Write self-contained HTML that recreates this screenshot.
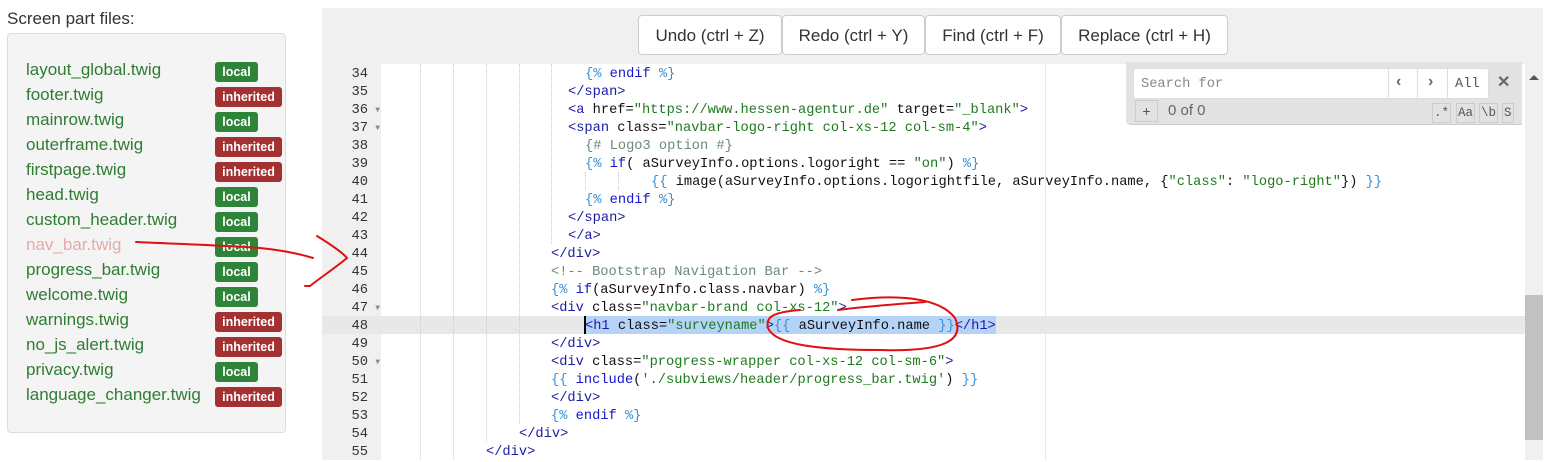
<!DOCTYPE html>
<html><head><meta charset="utf-8"><style>
body{margin:0;width:1565px;height:460px;overflow:hidden;background:#fff;font-family:"Liberation Sans",sans-serif;position:relative}
.abs{position:absolute}
.title{left:7px;top:9px;font-size:17px;color:#333}
.box{left:7px;top:33px;width:277px;height:398px;background:#f4f4f4;border:1px solid #ddd;border-radius:4px}
.it{position:absolute;left:26px;font-size:17px;color:#2e7d32;line-height:20px}
.bd{position:absolute;left:215px;height:20px;border-radius:3px;color:#fff;font-weight:bold;font-size:12.5px;line-height:20px;text-align:center}
.lo{background:#2e8539;width:43px}.in{background:#a33131;width:67px}
.btn{position:absolute;top:15px;height:40px;background:#fff;border:1px solid #ccc;border-radius:4px;font-size:17px;color:#333;line-height:40px;text-align:center;box-sizing:border-box}
.ln{position:absolute;left:322px;width:46px;text-align:right;font-family:"Liberation Mono",monospace;font-size:13.8px;color:#333;line-height:18px;margin-top:2px}
.cd{position:absolute;font-family:"Liberation Mono",monospace;font-size:13.7px;line-height:18px;white-space:pre;color:#111;margin-top:2px}
.t{color:#1a1aa6}.s{color:#1f7a1f}.b{color:#3b8fd1}.k{color:#1515d0}.c{color:#6a8a7a}
.g{position:absolute;width:0;border-left:1px dotted #ccc;top:64px;height:396px}
</style></head><body>
<div class="abs title">Screen part files:</div>
<div class="abs box"></div>
<div class="it" style="top:60px">layout_global.twig</div><div class="bd lo" style="top:62px">local</div>
<div class="it" style="top:85px">footer.twig</div><div class="bd in" style="top:87px">inherited</div>
<div class="it" style="top:110px">mainrow.twig</div><div class="bd lo" style="top:112px">local</div>
<div class="it" style="top:135px">outerframe.twig</div><div class="bd in" style="top:137px">inherited</div>
<div class="it" style="top:160px">firstpage.twig</div><div class="bd in" style="top:162px">inherited</div>
<div class="it" style="top:185px">head.twig</div><div class="bd lo" style="top:187px">local</div>
<div class="it" style="top:210px">custom_header.twig</div><div class="bd lo" style="top:212px">local</div>
<div class="it" style="top:235px;color:#e8a9a9">nav_bar.twig</div><div class="bd lo" style="top:237px">local</div>
<div class="it" style="top:260px">progress_bar.twig</div><div class="bd lo" style="top:262px">local</div>
<div class="it" style="top:285px">welcome.twig</div><div class="bd lo" style="top:287px">local</div>
<div class="it" style="top:310px">warnings.twig</div><div class="bd in" style="top:312px">inherited</div>
<div class="it" style="top:335px">no_js_alert.twig</div><div class="bd in" style="top:337px">inherited</div>
<div class="it" style="top:360px">privacy.twig</div><div class="bd lo" style="top:362px">local</div>
<div class="it" style="top:385px">language_changer.twig</div><div class="bd in" style="top:387px">inherited</div>

<div class="abs" style="left:322px;top:8px;width:1221px;height:56px;background:#f0f0f0"></div>
<div class="abs" style="left:322px;top:64px;width:59px;height:396px;background:#f0f0f0"></div>
<div class="abs" style="left:1525px;top:64px;width:18px;height:396px;background:#f0f0f0"></div>
<div class="abs" style="left:1525px;top:295px;width:18px;height:145px;background:#c1c1c1"></div>
<div class="abs" style="left:1529px;top:75px;width:0;height:0;border:5px solid transparent;border-bottom:5px solid #555;border-top:0"></div>
<div class="abs" style="left:322px;top:316px;width:1203px;height:18px;background:#e8e8e8"></div>
<div class="abs" style="left:585px;top:316px;width:411px;height:18px;background:#b5d3f7"></div>
<div class="abs" style="left:584px;top:316px;width:2px;height:18px;background:#000"></div>
<div class="abs" style="left:1045px;top:64px;width:0;height:396px;border-left:1px solid #e8e8e8"></div>
<div class="g" style="left:420px"></div><div class="g" style="left:453px"></div><div class="g" style="left:486px;top:64px;height:378px"></div><div class="g" style="left:519px;height:360px"></div><div class="g" style="left:551px;height:180px"></div><div class="g" style="left:585px;top:172px;height:18px"></div><div class="g" style="left:618px;top:172px;height:18px"></div>

<div class="btn" style="left:638px;width:144px">Undo (ctrl + Z)</div>
<div class="btn" style="left:782px;width:143px">Redo (ctrl + Y)</div>
<div class="btn" style="left:925px;width:136px">Find (ctrl + F)</div>
<div class="btn" style="left:1061px;width:167px">Replace (ctrl + H)</div>

<div class="ln" style="top:64px">34</div><div class="ln" style="top:82px">35</div><div class="ln" style="top:100px">36 <span style="font-size:8px;color:#888">▼</span></div><div class="ln" style="top:118px">37 <span style="font-size:8px;color:#888">▼</span></div>
<div class="ln" style="top:136px">38</div><div class="ln" style="top:154px">39</div><div class="ln" style="top:172px">40</div><div class="ln" style="top:190px">41</div><div class="ln" style="top:208px">42</div><div class="ln" style="top:226px">43</div><div class="ln" style="top:244px">44</div><div class="ln" style="top:262px">45</div><div class="ln" style="top:280px">46</div><div class="ln" style="top:298px">47 <span style="font-size:8px;color:#888">▼</span></div><div class="ln" style="top:316px">48</div><div class="ln" style="top:334px">49</div><div class="ln" style="top:352px">50 <span style="font-size:8px;color:#888">▼</span></div><div class="ln" style="top:370px">51</div><div class="ln" style="top:388px">52</div><div class="ln" style="top:406px">53</div><div class="ln" style="top:424px">54</div><div class="ln" style="top:442px">55</div>
<style>.ln span{position:absolute;right:-12px;top:0}</style>

<div class="cd" style="left:585px;top:64px"><span class="b">{%</span> <span class="k">endif</span> <span class="b">%}</span></div>
<div class="cd" style="left:568px;top:82px"><span class="t">&lt;/span&gt;</span></div>
<div class="cd" style="left:568px;top:100px"><span class="t">&lt;a</span> href=<span class="s">"https://www.hessen-agentur.de"</span> target=<span class="s">"_blank"</span><span class="t">&gt;</span></div>
<div class="cd" style="left:568px;top:118px"><span class="t">&lt;span</span> class=<span class="s">"navbar-logo-right col-xs-12 col-sm-4"</span><span class="t">&gt;</span></div>
<div class="cd" style="left:585px;top:136px"><span class="c">{# Logo3 option #}</span></div>
<div class="cd" style="left:585px;top:154px"><span class="b">{%</span> <span class="k">if</span>( aSurveyInfo.options.logoright == <span class="s">"on"</span>) <span class="b">%}</span></div>
<div class="cd" style="left:651px;top:172px"><span class="b">{{</span> image(aSurveyInfo.options.logorightfile, aSurveyInfo.name, {<span class="s">"class"</span>: <span class="s">"logo-right"</span>}) <span class="b">}}</span></div>
<div class="cd" style="left:585px;top:190px"><span class="b">{%</span> <span class="k">endif</span> <span class="b">%}</span></div>
<div class="cd" style="left:568px;top:208px"><span class="t">&lt;/span&gt;</span></div>
<div class="cd" style="left:568px;top:226px"><span class="t">&lt;/a&gt;</span></div>
<div class="cd" style="left:551px;top:244px"><span class="t">&lt;/div&gt;</span></div>
<div class="cd" style="left:551px;top:262px"><span class="c">&lt;!-- Bootstrap Navigation Bar --&gt;</span></div>
<div class="cd" style="left:551px;top:280px"><span class="b">{%</span> <span class="k">if</span>(aSurveyInfo.class.navbar) <span class="b">%}</span></div>
<div class="cd" style="left:551px;top:298px"><span class="t">&lt;div</span> class=<span class="s">"navbar-brand col-xs-12"</span><span class="t">&gt;</span></div>
<div class="cd" style="left:585px;top:316px"><span class="t">&lt;h1</span> class=<span class="s">"surveyname"</span><span class="t">&gt;</span><span class="b">{{</span> aSurveyInfo.name <span class="b">}}</span><span class="t">&lt;/h1&gt;</span></div>
<div class="cd" style="left:551px;top:334px"><span class="t">&lt;/div&gt;</span></div>
<div class="cd" style="left:551px;top:352px"><span class="t">&lt;div</span> class=<span class="s">"progress-wrapper col-xs-12 col-sm-6"</span><span class="t">&gt;</span></div>
<div class="cd" style="left:551px;top:370px"><span class="b">{{</span> <span class="k">include</span>(<span class="s">'./subviews/header/progress_bar.twig'</span>) <span class="b">}}</span></div>
<div class="cd" style="left:551px;top:388px"><span class="t">&lt;/div&gt;</span></div>
<div class="cd" style="left:551px;top:406px"><span class="b">{%</span> <span class="k">endif</span> <span class="b">%}</span></div>
<div class="cd" style="left:519px;top:424px"><span class="t">&lt;/div&gt;</span></div>
<div class="cd" style="left:486px;top:442px"><span class="t">&lt;/div&gt;</span></div>

<div class="abs" style="left:1126px;top:62px;width:396px;height:62px;background:#e2e2e2;border-radius:0 0 0 5px;border-bottom:1px solid #ccc"></div>
<div class="abs" style="left:1133px;top:68px;width:354px;height:29px;background:#fff;border:1px solid #ddd;border-radius:3px"></div>
<div class="cd" style="left:1141px;top:74px;color:#888">Search for</div>
<div class="abs" style="left:1388px;top:68px;width:1px;height:30px;background:#ddd"></div>
<div class="abs" style="left:1417px;top:68px;width:1px;height:30px;background:#ddd"></div>
<div class="abs" style="left:1447px;top:68px;width:1px;height:30px;background:#ddd"></div>
<div class="abs" style="left:1396px;top:73px;font-size:16px;color:#666;font-weight:bold">‹</div>
<div class="abs" style="left:1428px;top:73px;font-size:16px;color:#666;font-weight:bold">›</div>
<div class="cd" style="left:1455px;top:74px;color:#555">All</div>
<div class="abs" style="left:1497px;top:72px;font-size:16px;color:#666;font-weight:bold">✕</div>
<div class="abs" style="left:1135px;top:100px;width:21px;height:20px;border:1px solid #ccc;font-size:14px;color:#555;text-align:center;line-height:20px">+</div>
<div class="abs" style="left:1168px;top:102px;font-size:15px;color:#666">0 of 0</div>
<div class="cd" style="left:1432px;top:101px;font-size:12.5px;color:#555;border:1px solid #ccc;padding:0 1px">.*</div>
<div class="cd" style="left:1456px;top:101px;font-size:12.5px;color:#555;border:1px solid #ccc;padding:0 1px">Aa</div>
<div class="cd" style="left:1479px;top:101px;font-size:12.5px;color:#555;border:1px solid #ccc;padding:0 1px">\b</div>
<div class="cd" style="left:1502px;top:101px;font-size:12.5px;color:#555;border:1px solid #ccc;padding:0 1px">S</div>

<svg class="abs" style="left:0;top:0" width="1565" height="460" fill="none" stroke="#e01010" stroke-width="2" stroke-linecap="round">
<path d="M136 242 C180 244 240 246 260 248 C280 250 300 254 313 258"/>
<path d="M317 236 C330 244 342 252 347 258 C335 268 320 278 310 286 L305 286"/>
<path d="M838 310 C870 306 900 304 925 302"/>
<path d="M852 300 C900 294 940 298 955 318 C965 340 945 352 880 350 C820 350 775 345 768 328 C765 316 775 312 800 310"/>
</svg>
</body></html>
